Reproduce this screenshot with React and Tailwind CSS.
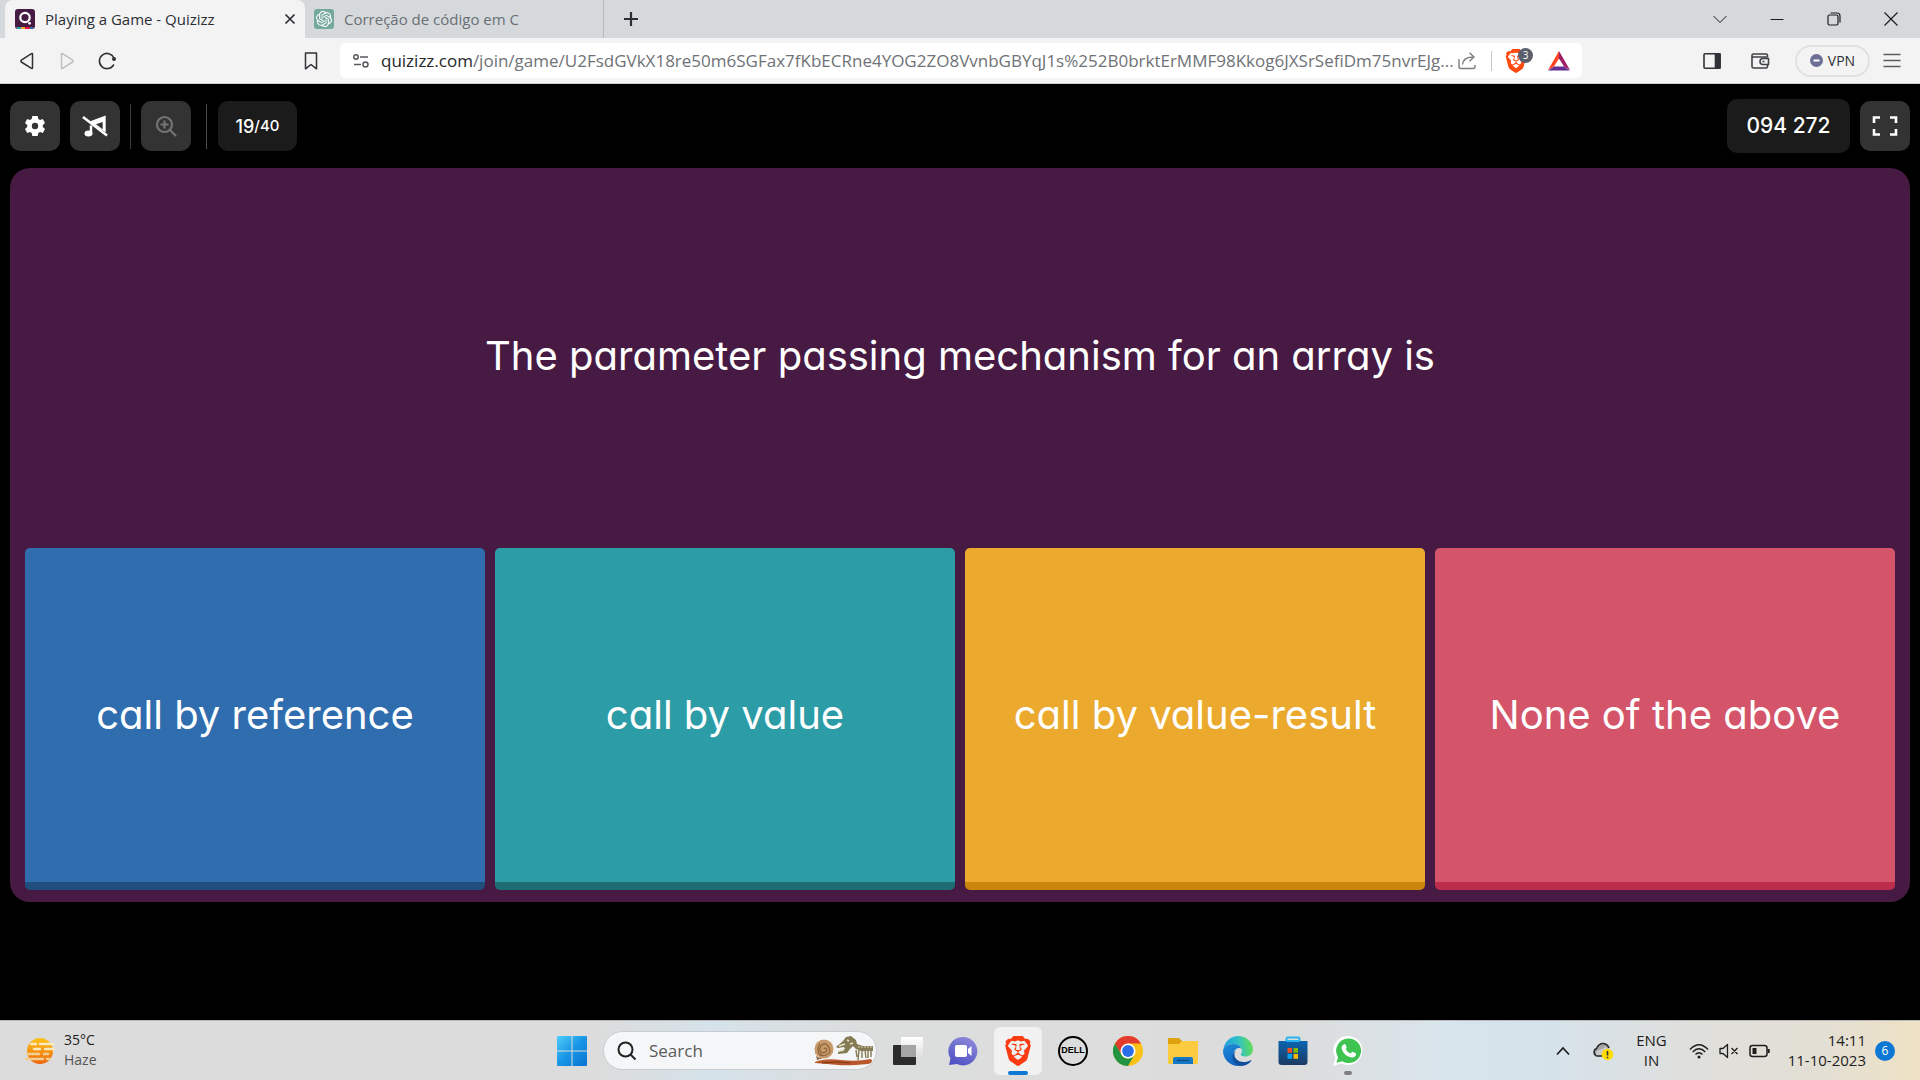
import { SiBrave, SiOpenai } from "react-icons/si";

const options = [
  { text: "call by reference", style: "bg-[#2f6dae] border-[#224e7d]" },
  { text: "call by value", style: "bg-[#2c9ca6] border-[#1f6d74]" },
  { text: "call by value-result", style: "bg-[#eba92d] border-[#c8860f]" },
  { text: "None of the above", style: "bg-[#d4546a] border-[#bb2d4a]" },
];

const rounded = "font-['Inter','Open_Sans',sans-serif] [font-feature-settings:'cv11']";
const darkButton = "flex size-[50px] items-center justify-center rounded-[10px] bg-[#333333] text-white";
const taskButton = "flex size-12 items-center justify-center rounded-md";

function QuizizzLogo() {
  return (
    <svg width="20" height="20" viewBox="0 0 20 20">
      <rect width="20" height="20" rx="3" fill="#461a42" />
      <path d="M1 18h18a3 3 0 0 1-2 2H3a3 3 0 0 1-2-2z" fill="#ec0b43" />
      <path d="M1 18h5v2H3a3 3 0 0 1-2-2z" fill="#2d9da6" />
      <path d="M6 18h4v2H6z" fill="#efa929" />
      <path d="M15 18h4a3 3 0 0 1-2 2h-2z" fill="#2d70ae" />
      <circle cx="10" cy="8.5" r="4.7" fill="none" stroke="#fff" strokeWidth="2.2" />
      <circle cx="14.5" cy="14.3" r="1.4" fill="#fff" />
    </svg>
  );
}

function TabStrip() {
  return (
    <header className="flex h-[38px] bg-[#d5d9dc]">
      <div className="ml-[5px] flex w-[300px] items-center rounded-t-lg bg-[#f3f3f3] pl-[10px] pr-[7px] text-[#2b2f33]">
        <QuizizzLogo />
        <span className="ml-[10px] flex-1 truncate text-[15px]">Playing a Game - Quizizz</span>
        <button aria-label="Close tab" className="p-[2px]">
          <svg width="12" height="12" viewBox="0 0 12 12" stroke="currentColor" strokeWidth="1.7"><path d="M1.5 1.5l9 9M10.5 1.5l-9 9" /></svg>
        </button>
      </div>
      <div className="flex w-[299px] items-center border-r border-[#b4b9bd] pl-[9px] text-[#6a6f74]">
        <span className="flex size-5 items-center justify-center rounded-[3px] bg-[#75a99c] text-white"><SiOpenai size={16} /></span>
        <span className="ml-[10px] text-[15px]">Correção de código em C</span>
      </div>
      <button aria-label="New tab" className="ml-[17px] p-[2px] text-[#2b2f33]">
        <svg width="16" height="16" viewBox="0 0 16 16" stroke="currentColor" strokeWidth="2.2"><path d="M8 1v14M1 8h14" /></svg>
      </button>
      <div className="ml-auto mr-px flex items-center text-[#1c1c1c]">
        <button aria-label="Search tabs" className="flex w-[57px] justify-center">
          <svg width="14" height="14" viewBox="0 0 14 14" fill="none" stroke="currentColor"><path d="M.5 4L7 10.500l6.500-6.500" /></svg>
        </button>
        <button aria-label="Minimize" className="flex w-[57px] justify-center">
          <svg width="14" height="14" viewBox="0 0 14 14" stroke="currentColor"><path d="M.5 7.500h13" /></svg>
        </button>
        <button aria-label="Restore" className="flex w-[57px] justify-center">
          <svg width="14" height="14" viewBox="0 0 14 14" fill="none" stroke="currentColor" strokeWidth="1.200"><rect x="1" y="3" width="10" height="10" rx="1.500" /><path d="M3.500 1h6.500a3 3 0 0 1 3 3v6.500" /></svg>
        </button>
        <button aria-label="Close" className="flex w-[57px] justify-center">
          <svg width="14" height="14" viewBox="0 0 14 14" stroke="currentColor" strokeWidth="1.200"><path d="M.5.5l13 13M13.500.5l-13 13" /></svg>
        </button>
      </div>
    </header>
  );
}

function AddressBar() {
  return (
    <nav className="flex h-[46px] items-center border-b border-[#cfcfcf] bg-[#f3f3f3] text-[#3b3e4f]">
      <div className="flex w-[340px] items-center pl-[17px]">
        <button aria-label="Back" className="mr-5"><svg width="20" height="20" viewBox="0 0 20 20" fill="none" stroke="#2f3237" strokeWidth="1.500" strokeLinejoin="round"><path d="M15.500 3.200v13.600q0 1.200-1 .6L4.300 11q-1-.9 0-1.800L14.500 2.600q1-.5 1 .6z" /></svg></button>
        <button aria-label="Forward" className="mr-5"><svg width="20" height="20" viewBox="0 0 20 20" fill="none" stroke="#bdbfc2" strokeWidth="1.500" strokeLinejoin="round"><path d="M4.500 3.200v13.600q0 1.200 1 .6L15.700 11q1-.9 0-1.800L5.500 2.600q-1-.5-1 .6z" /></svg></button>
        <button aria-label="Reload"><svg width="20" height="20" viewBox="0 0 20 20" fill="none" stroke="#2f3237" strokeWidth="1.600" strokeLinecap="round"><path d="M17 7A7.600 7.600 0 1 0 16.500 14" /><circle cx="17" cy="8" r="2" fill="#2f3237" stroke="none" /></svg></button>
        <button aria-label="Bookmark" className="ml-auto mr-[19px]"><svg width="20" height="20" viewBox="0 0 20 20" fill="none" stroke="#2f3237" strokeWidth="1.500" strokeLinejoin="round"><path d="M4.500 2h11v15.800L10 13.500l-5.500 4.300z" /></svg></button>
      </div>
      <div className="flex h-[35px] min-w-0 flex-1 items-center rounded-[5px] bg-white">
        <button aria-label="Site settings" className="ml-3 mr-[3px]"><svg width="18" height="18" viewBox="0 0 18 18" fill="none" stroke="#55585c" strokeWidth="1.500"><circle cx="4" cy="5" r="2.200" /><path d="M8 5h8M2 12.500h7" /><circle cx="13.500" cy="12.500" r="2.500" /></svg></button>
        <a href="#game" className="min-w-0 flex-1 truncate pl-2 text-[17px] leading-6 text-[#6f7276]"><span className="text-[#25282b]">quizizz.com</span>/join/game/U2FsdGVkX18re50m6SGFax7fKbECRne4YOG2ZO8VvnbGBYqJ1s%252B0brktErMMF98Kkog6JXSrSefiDm75nvrEJg...</a>
        <button aria-label="Share"><svg width="20" height="20" viewBox="0 0 20 20" fill="none" stroke="#7b7e82" strokeWidth="1.400"><path d="M2 8v7.500q0 2 2 2h12.500q1.500 0 1.500-2V14M5.500 13.500Q6 6.500 15.500 6M12.500 1.800L17 6l-4.500 4.200" /></svg></button>
        <span className="ml-[14px] h-5 w-px bg-[#c3c5c8]" />
        <button aria-label="Brave Shields, 3 blocked" className="relative ml-3 text-[#ff4a10]">
          <SiBrave size={24} />
          <span className="absolute -right-[5px] -top-px flex size-[15px] items-center justify-center rounded-full bg-[#5b5e6b] text-[10px] leading-none text-white">3</span>
        </button>
        <button aria-label="Brave Rewards" className="ml-[19px] mr-[11px]"><svg width="24" height="24" viewBox="0 0 24 24"><path d="M12 2L1 21l6-3.500 5-8z" fill="#ff4724" /><path d="M12 2l11 19-6-3.500-5-8z" fill="#9e1f63" /><path d="M1 21.500h22l-6-4H7z" fill="#662d91" /></svg></button>
      </div>
      <div className="flex w-[338px] items-center justify-end">
        <button aria-label="Sidebar" className="mr-[28px]"><svg width="20" height="20" viewBox="0 0 20 20" fill="none" stroke="#303238" strokeWidth="1.600"><rect x="2" y="2.800" width="16" height="14.500" rx="1" /><path d="M13.500 3h4.500v14h-4.500z" fill="#303238" /></svg></button>
        <button aria-label="Wallet" className="mr-[25px]"><svg width="20" height="20" viewBox="0 0 20 20" fill="none" stroke="#3f4247" strokeWidth="1.600" strokeLinejoin="round"><path d="M17.500 6.500v-2q0-1.500-1.500-1.500H3.500q-1.500 0-1.500 1.500v11Q2 17 3.500 17H16q1.500 0 1.500-1.500v-2M2 6h15.500" /><path d="M18.500 7.500H13a3 3 0 0 0 0 6h5.500z" /><path d="M12.500 10.500h2" /></svg></button>
        <button className="mr-3 flex h-8 w-[75px] items-center justify-center gap-[5px] rounded-full border-2 border-[#e1e1e2] text-[14px] text-[#2c2e36]">
          <svg width="13" height="13" viewBox="0 0 13 13"><circle cx="6.500" cy="6.500" r="6.500" fill="#6b7094" /><path d="M3.500 6.500h6" stroke="#fff" strokeWidth="2" /></svg>
          VPN
        </button>
        <button aria-label="Menu" className="mr-[18px]"><svg width="20" height="20" viewBox="0 0 20 20" stroke="#5a5c61" strokeWidth="1.500"><path d="M1.500 3.500h17M1.500 9.500h17M1.500 15.500h17" /></svg></button>
      </div>
    </nav>
  );
}

function Game() {
  return (
    <main className={"flex flex-1 flex-col bg-black px-[10px] pb-[118px] " + rounded}>
      <div className="flex h-[84px] items-center">
        <button aria-label="Settings" className={darkButton}>
          <svg width="20" height="22" viewBox="0 0 20 22"><path fill="#fff" fillRule="evenodd" d="M7.300 1h5.400l.6 3 1.800 1 2.700-1L20 8l-2.200 2v2L20 14l-2.200 4-2.700-1-1.800 1-.6 3H7.300l-.6-3-1.800-1-2.700 1L0 14l2.200-2v-2L0 8l2.200-4 2.700 1 1.800-1zM10 7.800a3.200 3.200 0 1 0 0 6.400 3.200 3.200 0 0 0 0-6.400z" /></svg>
        </button>
        <button aria-label="Music off" className={darkButton + " ml-[10px]"}>
          <svg width="26" height="22" viewBox="0 0 26 22" fill="none" stroke="#fff"><path d="M7.500 6.500L23.700.5v17z" fill="#fff" stroke="none" /><path d="M14 9.200l6.700-2.300v7.300z" fill="#333" stroke="none" /><path d="M9 10.500v8" strokeWidth="2.500" /><ellipse cx="6.500" cy="18.500" rx="4" ry="2.900" fill="#fff" stroke="none" /><path d="M1 2l24 18.500" strokeWidth="2.600" /></svg>
        </button>
        <span className="ml-[10px] h-[45px] w-px bg-[#3a3a3a]" />
        <button aria-label="Zoom in" className={darkButton + " ml-[10px]"}>
          <svg width="22" height="22" viewBox="0 0 22 22" fill="none" stroke="#747474" strokeWidth="2.200"><circle cx="9.500" cy="9.500" r="7.500" /><path d="M15 15l6 6M9.500 5.500v8M5.500 9.500h8" /></svg>
        </button>
        <span className="ml-[15px] h-[45px] w-px bg-[#4a4a4a]" />
        <div className="ml-[11px] flex h-[50px] w-[79px] items-center justify-center rounded-[10px] bg-[#1b1b1b] font-medium text-white">
          <span className="text-[18px]">19</span><span className="text-[15px]">/40</span>
        </div>
        <div className="ml-auto flex h-[54px] w-[123px] items-center justify-center rounded-[10px] bg-[#1b1b1b] text-[21px] font-medium text-white">094 272</div>
        <button aria-label="Full screen" className={darkButton + " ml-[10px]"}>
          <svg width="26" height="20" viewBox="0 0 26 20" fill="none" stroke="#fff" strokeWidth="2.600"><path d="M8 1.500H2V7M18 1.500h6V7M8 18.500H2V13M18 18.500h6V13" /></svg>
        </button>
      </div>
      <section className="flex flex-1 flex-col rounded-[20px] bg-[#461a42] px-[15px] pb-3 text-[40px] leading-[50px] text-white">
        <h1 className="flex flex-[376_1_0px] items-center justify-center pb-1 text-center">The parameter passing mechanism for an array is</h1>
        <div className="grid flex-[342_1_0px] grid-cols-4 gap-[10px]">
          {options.map((o) => (
            <button key={o.text} className={"rounded-[5px] border-b-8 px-4 " + o.style}>{o.text}</button>
          ))}
        </div>
      </section>
    </main>
  );
}

function ChromeLogo() {
  return (
    <svg width="30" height="30" viewBox="0 0 30 30">
      <circle cx="15" cy="15" r="15" fill="#fbc116" />
      <path d="M15 7.500h13A15 15 0 0 0 2 7.500l6.500 11.250z" fill="#e33b2e" />
      <path d="M2 7.500A15 15 0 0 0 15 30l6.500-11.250A7.500 7.500 0 0 1 8.500 18.750z" fill="#229342" />
      <circle cx="15" cy="15" r="7.500" fill="#fff" />
      <circle cx="15" cy="15" r="5.900" fill="#2b6fe8" />
    </svg>
  );
}

function EdgeLogo() {
  return (
    <svg width="30" height="30" viewBox="0 0 30 30">
      <defs>
        <linearGradient id="edgeTop" x1="0" y1=".5" x2="1" y2=".4"><stop offset="0" stopColor="#1f9be0" /><stop offset=".5" stopColor="#2fc0c8" /><stop offset="1" stopColor="#66dd52" /></linearGradient>
        <linearGradient id="edgeLeft" x1="0" y1="0" x2=".4" y2="1"><stop offset="0" stopColor="#1c8fd8" /><stop offset="1" stopColor="#1262c0" /></linearGradient>
      </defs>
      <path d="M.5 12.500C2 5 8 0 15 0c8 0 15 6 15 13 0 5-3.500 7.500-7.500 7.500-3 0-4.800-1-4.800-2 0-.8 1.300-1.200 1.300-3.500C19 11 15 8 10.500 8 6 8 2 10 .5 12.500z" fill="url(#edgeTop)" />
      <path d="M0 15C0 11 4.500 8 10.500 8c4 0 6.500 2 7.800 4.500C16 11 11 12.500 10.500 18c-.4 5 3 10 7.500 11.700C8.500 31.500 0 24 0 15z" fill="url(#edgeLeft)" />
      <path d="M12.800 14.500c-4 5.500.8 11.500 8 11.500 2.800 0 5-.9 6.700-1.800.6-.3 1 .2.7.7C26 28 22.500 29.700 18.500 30 11 29.500 6 20 12.800 14.500z" fill="#0f4f9e" />
    </svg>
  );
}

function TaskView() {
  return (
    <svg width="30" height="28" viewBox="0 0 30 28">
      <defs><linearGradient id="tvFront" x1="0" y1="0" x2="0" y2="1"><stop offset="0" stopColor="#fff" /><stop offset="1" stopColor="#dedede" /></linearGradient></defs>
      <rect y="8" width="23" height="20" rx="1" fill="#2b2b2b" />
      <rect x="8" width="22" height="20" rx="1" fill="url(#tvFront)" />
      <path d="M8 8h15v12H8z" fill="#a5a5a5" />
    </svg>
  );
}

function Fossils() {
  return (
    <svg width="60" height="30" viewBox="0 0 60 30" fill="none" className="ml-auto">
      <path d="M1 26q10-4 26-2t30-1q3 4-3 5-20 2-30 1T1 27z" fill="#b9582b" />
      <path d="M8 27q14-2 28 0" stroke="#803516" />
      <circle cx="10" cy="13" r="9.500" fill="#c79a6b" />
      <path d="M1 14q0 9 8 8l-6 2z" fill="#8c623d" />
      <path d="M10 13q1-2 2.500 0t-2 3.500-4.500-2 2.500-6 6.500 3-3 7.500-7.500-2.500 1.500-9" stroke="#8d6038" strokeWidth="1.200" />
      <path d="M22 11l7-6 3-4 5-1 5 4 1 4 6 2 10 0v5H47l-5-2-3-3-3 3-3 4-9 1 0-2 7-3-1-2-6 1z" fill="#857c55" />
      <path d="M25 10l6-2M33 4l2 1M25 15l5-1M36 8l3-1" stroke="#e9e2c4" strokeWidth="1.500" />
      <path d="M42 14l1 7M45 14l-1 10M48 15v7M51 14l1 8M54 14v8M57 13v8" stroke="#8a8059" strokeWidth="1.500" />
      <path d="M44 11h14" stroke="#d8d0ae" strokeWidth="1.200" strokeDasharray="2 1" />
    </svg>
  );
}

function Taskbar() {
  return (
    <footer className="flex h-[60px] items-center border-t border-[#b9b9b9] bg-[linear-gradient(90deg,#dcdcdc_0%,#dcdcdc_31%,#d5e2ea_37%,#dcdddd_45%,#dcdcdc_67%,#d9e5ec_75%,#d6e2ea_81%,#dfdfdc_88%,#e3dfd4_95%,#efe2c4_100%)] text-[#1d1d1d]">
      <div className="flex flex-1 items-center">
        <svg className="ml-[25px]" width="30" height="30" viewBox="0 0 30 30" strokeLinecap="round" strokeWidth="2.400">
          <defs><linearGradient id="sun" x1="0" y1="0" x2="0" y2="1"><stop offset="0" stopColor="#fcc419" /><stop offset="1" stopColor="#f0660c" /></linearGradient></defs>
          <circle cx="15" cy="15" r="13" fill="url(#sun)" />
          <path d="M6 8h5M15 8h13M9 13h6M20 13h9" stroke="#fbe9bd" />
          <path d="M2 18h12M19 18h4M1 23h17M22 23h3" stroke="#efcf94" />
        </svg>
        <div className="ml-[9px] pb-[2px] text-[14px] leading-5"><p>35°C</p><p className="text-[#555]">Haze</p></div>
      </div>
      <div className="flex items-center gap-[7px]">
        <button aria-label="Start" className={taskButton}>
          <svg width="30" height="30" viewBox="0 0 30 30"><defs><linearGradient id="win" x1="0" y1="0" x2="1" y2="1"><stop offset="0" stopColor="#4fcdfb" /><stop offset=".5" stopColor="#1795e5" /><stop offset="1" stopColor="#0873d2" /></linearGradient></defs><path d="M0 1q0-1 1-1h13.500v14.500H0zM15.500 0H29q1 0 1 1v13.500H15.500zM0 15.500h14.500V30H1q-1 0-1-1zM15.500 15.500H30V29q0 1-1 1H15.500z" fill="url(#win)" /></svg>
        </button>
        <label className="flex h-[39px] w-[274px] items-center overflow-hidden rounded-full border border-[#c9cccf] bg-[#f4f6f8] pl-[13px] pr-[2px]">
          <svg width="20" height="20" viewBox="0 0 20 20" fill="none" stroke="#222" strokeWidth="2"><circle cx="8.500" cy="8.500" r="7" /><path d="M13.500 13.500l5 5" /></svg>
          <input aria-label="Search" placeholder="Search" className="ml-3 w-0 flex-1 bg-transparent text-[17px] leading-6 outline-none placeholder:text-[#5b5b5b]" />
          <Fossils />
        </label>
        <button aria-label="Task view" className={taskButton}><TaskView /></button>
        <button aria-label="Chat" className={taskButton}>
          <svg width="30" height="30" viewBox="0 0 30 30"><defs><linearGradient id="chat" x1=".2" y1="1" x2=".7" y2="0"><stop offset="0" stopColor="#4e4fc4" /><stop offset=".6" stopColor="#7272cf" /><stop offset="1" stopColor="#8f87dc" /></linearGradient></defs><path d="M15 1a14.200 14.200 0 1 1-6 27L1 29l1.500-6.500A14.200 14.200 0 0 1 15 1z" fill="url(#chat)" /><rect x="7" y="9" width="12" height="12" rx="2" fill="#fff" /><path d="M20 13l3.500-3v10L20 17z" fill="#fff" /></svg>
        </button>
        <button aria-label="Brave" className={taskButton + " relative bg-[#f1f1f1] text-[#fb3c12]"}>
          <SiBrave size={30} />
          <span className="absolute bottom-0 h-1 w-5 rounded-full bg-[#0f78d4]" />
        </button>
        <button aria-label="Dell" className={taskButton}>
          <span className="flex size-[30px] items-center justify-center rounded-full border-2 border-black font-['Liberation_Sans',Arial,sans-serif] text-[9px] font-bold leading-none text-black">DELL</span>
        </button>
        <button aria-label="Chrome" className={taskButton}><ChromeLogo /></button>
        <button aria-label="File Explorer" className={taskButton}>
          <svg width="30" height="26" viewBox="0 0 30 26"><path d="M0 1q0-1 1-1h10l3 3h15q1 0 1 1v6H0z" fill="#dfa10d" /><path d="M0 6h11l3-3h15q1 0 1 1v21q0 1-1 1H1q-1 0-1-1z" fill="#fccb3f" /><path d="M5 26v-5q0-2 2-2h16q2 0 2 2v5z" fill="#1579c8" /><path d="M9 22.500h12" stroke="#0c4d85" strokeWidth="1.500" /></svg>
        </button>
        <button aria-label="Edge" className={taskButton}><EdgeLogo /></button>
        <button aria-label="Microsoft Store" className={taskButton}>
          <svg width="30" height="30" viewBox="0 0 30 30"><defs><linearGradient id="bag" x1="0" y1="0" x2="0" y2="1"><stop offset="0" stopColor="#0b65b0" /><stop offset="1" stopColor="#1c3a63" /></linearGradient></defs><path d="M8.500 8V3q0-1.500 1.500-1.500h10q1.500 0 1.500 1.500v5" fill="none" stroke="#2bb5f0" strokeWidth="2" /><path d="M.5 5h29v21q0 3-3 3h-23q-3 0-3-3z" fill="url(#bag)" /><path d="M8.500 5h13" stroke="#2bb5f0" strokeWidth="2" /><path d="M9.500 12H14v4.800H9.500z" fill="#f25022" /><path d="M15.500 12H20v4.800h-4.500z" fill="#7fba00" /><path d="M9.500 18H14v4.800H9.500z" fill="#00a4ef" /><path d="M15.500 18H20v4.800h-4.500z" fill="#ffb900" /></svg>
        </button>
        <button aria-label="WhatsApp" className={taskButton + " relative"}>
          <svg width="30" height="30" viewBox="0 0 30 30"><path d="M15.500 0a14.500 14.500 0 1 1-7 27.500L0 30l2.500-8A14.500 14.500 0 0 1 15.500 0z" fill="#fff" /><path d="M15.500 2.500a12.300 12.300 0 1 1-6.300 22.700L3.500 26.700l1.600-5.400A12.300 12.300 0 0 1 15.500 2.500z" fill="#3fc351" /><path d="M11 8.200q1-.6 1.600.6l1 2.400q.2.700-.9 2 1.700 3.200 5 4.400l1.300-1.500q.5-.5 1.200-.1l2.500 1.300q.7.500.2 2-1 2.500-4 2.300-8-1.500-10.200-8.600-.6-3 2.300-4.800z" fill="#fff" /></svg>
          <span className="absolute bottom-0 h-1 w-2 rounded-full bg-[#808080]" />
        </button>
      </div>
      <div className="flex flex-1 items-center justify-end text-[15px] leading-5">
        <button aria-label="Show hidden icons"><svg width="14" height="10" viewBox="0 0 14 10" fill="none" stroke="currentColor" strokeWidth="1.700"><path d="M1 8.500l6-6.500 6 6.500" /></svg></button>
        <svg className="ml-[22px]" width="22" height="20" viewBox="0 0 22 20"><path d="M5 15a4 4 0 0 1-.5-7.500Q7 2 11.500 2.500q4 .5 5.500 4.500" fill="#a6a6a6" stroke="#2b2b2b" strokeWidth="1.600" /><path d="M5 15q-2.500-4 1.500-6 4-.5 7-3.500l3 3-6 7z" fill="#c9c9c9" /><path d="M5 15h6" stroke="#2b2b2b" strokeWidth="1.600" /><circle cx="15.500" cy="13.500" r="5.800" fill="#ffdd00" /><path d="M15.500 10v4.500M15.500 15.800v1.500" stroke="#333" strokeWidth="1.600" /></svg>
        <div className="ml-[22px] pb-[2px] text-center"><p>ENG</p><p>IN</p></div>
        <svg className="ml-[22px]" width="20" height="16" viewBox="0 0 20 16" fill="none" stroke="currentColor" strokeWidth="1.400"><path d="M1 6.500q9-9.500 18 0M3.700 9q6.300-6.500 12.600 0M6.500 11.500q3.500-3.500 7 0" /><circle cx="10" cy="14" r="1.500" fill="currentColor" stroke="none" /></svg>
        <svg className="ml-[10px]" width="20" height="16" viewBox="0 0 20 16" fill="none" stroke="currentColor" strokeWidth="1.300" strokeLinejoin="round"><path d="M1 5.500h3l4.500-4v13L4 10.500H1zM12.500 5l6 6M18.500 5l-6 6" /></svg>
        <svg className="ml-[10px]" width="21" height="14" viewBox="0 0 21 14" fill="none" stroke="currentColor" strokeWidth="1.500"><rect x="1" y="1.500" width="17" height="11" rx="2.500" /><path d="M3.500 4h4v6h-4z" fill="currentColor" stroke="none" /><path d="M19.700 5v4" strokeWidth="2" /></svg>
        <div className="ml-[18px] pb-[2px] text-right"><p>14:11</p><p>11-10-2023</p></div>
        <span className="ml-[9px] mr-[25px] flex size-5 items-center justify-center rounded-full bg-[#0f78d4] text-[12px] leading-none text-white">6</span>
      </div>
    </footer>
  );
}

export default function App() {
  return (
    <div className="flex min-h-screen flex-col font-['Open_Sans','Noto_Sans',sans-serif]">
      <TabStrip />
      <AddressBar />
      <Game />
      <Taskbar />
    </div>
  );
}
